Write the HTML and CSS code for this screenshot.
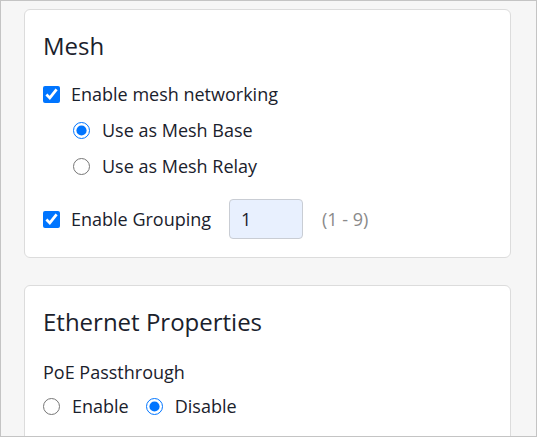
FILE: index.html
```html
<!DOCTYPE html>
<html>
<head>
<meta charset="utf-8">
<link rel="stylesheet" href="styles.css">
</head>
<body>
<div class="frame">
  <section class="card">
    <h2 class="card-title">Mesh</h2>
    <label class="row row-first"><input type="checkbox" class="check" checked><span>Enable mesh networking</span></label>
    <div class="sub">
      <label class="row"><input type="radio" class="radio" name="mesh" checked><span>Use as Mesh Base</span></label>
      <label class="row"><input type="radio" class="radio" name="mesh"><span>Use as Mesh Relay</span></label>
    </div>
    <div class="row group">
      <label class="group-label"><input type="checkbox" class="check" checked><span>Enable Grouping</span></label>
      <input type="text" class="num" value="1">
      <span class="hint">(1 - 9)</span>
    </div>
  </section>
  <section class="card card-open">
    <h2 class="card-title">Ethernet Properties</h2>
    <div class="field-label">PoE Passthrough</div>
    <div class="row inline-radios">
      <label class="opt"><input type="radio" class="radio" name="poe"><span>Enable</span></label>
      <label class="opt"><input type="radio" class="radio" name="poe" checked><span>Disable</span></label>
    </div>
  </section>
</div>
</body>
</html>
```

FILE: styles.css
```css
* { box-sizing: border-box; }
html, body {
  margin: 0;
  padding: 0;
  height: 100%;
}
body {
  font-family: "Open Sans", "Noto Sans", sans-serif;
  color: #1a212c;
  font-size: 18px;
}
.frame {
  height: 437px;
  border: 1px solid #c4c4c4;
  background: #f6f6f6;
  overflow: hidden;
  padding: 8px 25px 0 23px;
  display: flex;
  flex-direction: column;
  gap: 27px;
}
.card {
  background: #fff;
  border: 1px solid #dcdcdc;
  border-radius: 6px;
  padding: 19px 18px 18px 18px;
  flex-shrink: 0;
}
.card-open {
  padding-bottom: 40px;
}
.card-title {
  margin: 0;
  font-size: 24px;
  font-weight: 400;
  line-height: 33px;
}
.row {
  display: flex;
  align-items: center;
  height: 26px;
  line-height: 26px;
}
.row-first { margin-top: 19px; }
.sub {
  padding-left: 30px;
  display: flex;
  flex-direction: column;
  gap: 10px;
  margin-top: 10px;
}
.check {
  width: 17px;
  height: 17px;
  margin: 0 11px 0 0;
}
.radio {
  width: 17px;
  height: 17px;
  margin: 0 12px 0 0;
}
.group {
  height: 40px;
  margin-top: 20px;
}
.group-label {
  display: flex;
  align-items: center;
}
.num {
  width: 74px;
  height: 40px;
  margin-left: 18px;
  border: 1px solid #c9cdd4;
  border-radius: 4px;
  background: #e8f0fe;
  font-family: "Open Sans", "Noto Sans", sans-serif;
  font-size: 18px;
  color: #1a212c;
  padding: 0 11px;
}
.hint {
  margin-left: 19px;
  color: #8a8a8a;
}
.field-label {
  margin-top: 21px;
  line-height: 26px;
}
.inline-radios {
  margin-top: 8px;
  gap: 17px;
}
.opt {
  display: flex;
  align-items: center;
}
```
